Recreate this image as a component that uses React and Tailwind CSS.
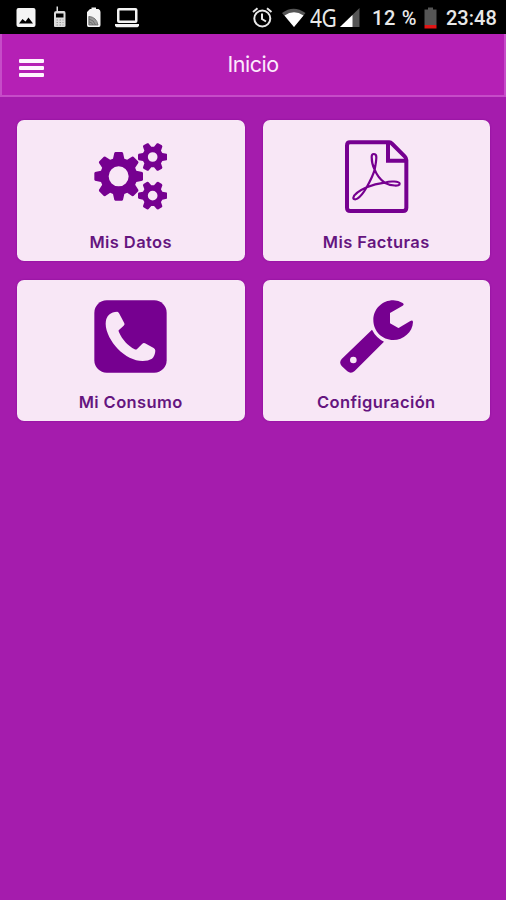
import React from 'react';

// Outline of a gear plus its round hole, teeth start at 3 o'clock
const gearPath = ({ cx, cy, teeth, outer, body, hole, tip, base }) => {
  const points = [];
  for (let i = 0; i < teeth; i++) {
    const a = (i * 2 * Math.PI) / teeth;
    [
      [body, -base],
      [outer - 2, -tip],
      [outer, -tip + 3],
      [outer, tip - 3],
      [outer - 2, tip],
      [body, base],
    ].forEach(([r, t]) => {
      const x = cx + r * Math.cos(a) - t * Math.sin(a);
      const y = cy + r * Math.sin(a) + t * Math.cos(a);
      points.push(`${x.toFixed(1)} ${y.toFixed(1)}`);
    });
  }
  return `M${points.join('L')}ZM${cx - hole} ${cy}a${hole} ${hole} 0 1 0 ${hole * 2} 0a${hole} ${hole} 0 1 0 ${-hole * 2} 0Z`;
};

const gears = [
  { cx: 326, cy: 193, teeth: 8, outer: 73, body: 53, hole: 30, tip: 13, base: 17 },
  { cx: 428, cy: 135, teeth: 6, outer: 44, body: 29, hole: 14.5, tip: 9.5, base: 12 },
  { cx: 428, cy: 251, teeth: 6, outer: 44, body: 29, hole: 14.5, tip: 9.5, base: 12 },
];

const CogsIcon = () => (
  <svg viewBox="252 84 219 219" className="h-[73px] w-[73px]" fill="currentColor">
    {gears.map((gear) => (
      <path key={gear.cy} fillRule="evenodd" d={gearPath(gear)} />
    ))}
  </svg>
);

const PdfIcon = () => (
  <svg viewBox="252 84 219 219" className="h-[73px] w-[73px]" fill="none" stroke="currentColor">
    <path strokeWidth="12" strokeLinejoin="round" d="M282 91H400Q404 91 409 96L446 133Q451 138 451 144V287Q451 297 441 297H283Q273 297 273 287V101Q273 91 282 91Z" />
    <path strokeWidth="12" d="M396 92V146H451" />
    <path
      strokeWidth="6.5"
      strokeLinejoin="round"
      d="M353 126C359 126 361 129 361 135C361 148 358 162 356 173C349 160 347 147 347 135C347 129 348 126 353 126ZM356 173C350 194 341 210 332 226C348 219 368 214 386 212C373 203 363 191 356 173ZM332 226C310 236 294 249 292 257C291 263 299 263 304 260C314 254 323 242 332 226ZM386 212C403 206 430 208 431 215C432 224 405 222 386 212Z"
    />
  </svg>
);

const PhoneIcon = () => (
  <svg viewBox="252 84 219 219" className="h-[73px] w-[73px]">
    <rect x="253" y="85" width="217" height="217" rx="37" fill="currentColor" />
    <path
      fill="#f8e7f6"
      d="M322 119Q326 120 328 125L343 154Q345 158 341 161L326 175Q325 177 327 181C337 204 355 222 374 232Q378 234 382 230L397 215Q401 211 405 214L431 228Q436 231 436 236Q435 252 426 260Q415 267 398 267C372 267 345 252 323 230C304 210 287 180 287 155Q287 138 297 128Q307 119 322 119Z"
    />
  </svg>
);

const WrenchIcon = () => (
  <svg viewBox="252 84 219 219" className="h-[73px] w-[73px]" fill="currentColor">
    <path
      fillRule="evenodd"
      d="M348 173Q360 197 384 209L296 297Q285 307 274 298L257 282Q248 271 257 261ZM292 254A10 10 0 1 0 292 274A10 10 0 1 0 292 254Z"
    />
    <path d="M440 93Q446 97 440 101L402 123V154L427 168Q428 168 434 164L463 147Q470 143 471 150C470 181 442 204 412 204C378 204 352 177 352 144C352 111 379 85 412 85Q428 85 440 93Z" />
  </svg>
);

const items = [
  { label: 'Mis Datos', icon: CogsIcon },
  { label: 'Mis Facturas', icon: PdfIcon },
  { label: 'Mi Consumo', icon: PhoneIcon },
  { label: 'Configuración', icon: WrenchIcon },
];

const StatusBar = () => (
  <div className="flex h-[34px] items-center bg-black pl-4 pr-[9px] font-['Roboto',sans-serif] text-[#e8e8e8]">
    {/* Notification icons */}
    <svg width="124" height="34" viewBox="16 0 124 34" fill="#f4f4f4">
      <path fillRule="evenodd" d="M18.500 8H33.500Q35.500 8 35.500 10V25Q35.500 27 33.500 27H18.500Q16.500 27 16.500 25V10Q16.500 8 18.500 8ZM19 23.500H33L28.500 17.500L25.500 21.500L22.500 19Z" />
      <path fill="#dcdcdc" fillRule="evenodd" d="M56.500 6.500H58V11H64Q65.500 11 65.500 13V26Q65.500 27 64 27H55Q54 27 54 26V13Q54 11 56.500 11ZM56 13.500V17.500H63.500V13.500Z" />
      <path stroke="#999" strokeWidth="1" strokeDasharray="1.500 1.500" d="M56.500 20H63.500M56.500 22.500H63.500M56.500 25H63.500" />
      <path d="M90 9H91.500V7.500H96V9H98.500Q100.500 10 100.500 12V25Q100.500 27 99 27H88.500Q87 27 87 25V12Z" />
      <path fill="#999" d="M88.500 16Q96.500 17 98 25H88.500Z" />
      <path fill="none" stroke="#666" strokeWidth="0.800" d="M89 25V16.500Q96.500 17 98 25ZM89 19Q94 20 95.500 25M89 22Q92 22 93 25" />
      <path fillRule="evenodd" d="M119 8H135.500Q137.500 8 137.500 10V21Q137.500 23 135.500 23H119Q117 23 117 21V10Q117 8 119 8ZM119.500 10.500V20.500H135V10.500Z" />
      <path d="M115 24H139V26L137.500 27.300H116.500L115 26Z" />
    </svg>
    <div className="grow" />
    {/* Alarm, wifi */}
    <svg width="58" height="34" viewBox="250 0 58 34">
      <g fill="none" stroke="#e8e8e8" strokeWidth="2">
        <circle cx="262.300" cy="18.500" r="8" />
        <path d="M262 13.500V19L266 21.500M253 12L257.500 8.300M267 8.300L271.500 12" />
      </g>
      <path fill="#555" d="M282 13Q293.500 4.500 305.500 13L294 27Z" />
      <path fill="#fff" d="M284.500 15.500Q294 9 303.500 15.500L294 27Z" />
    </svg>
    <span className="ml-[2px] w-[29px] origin-left scale-x-[0.84] font-['Noto_Sans',sans-serif] text-[25px] leading-[34px] tracking-[-0.5px]">4G</span>
    <svg width="21" height="34" viewBox="340 0 21 34">
      <path fill="#555" d="M360.500 8V27H341Z" />
      <path fill="#fff" d="M353.500 15V27H341Z" />
    </svg>
    <span className="ml-[12px] w-[46px] whitespace-nowrap pt-[2px] text-[20px] font-medium leading-[34px] tracking-[0.7px]">12 %</span>
    <svg width="14" height="34" viewBox="423 0 14 34" className="ml-[5px]">
      <path fill="#555" d="M424.500 9.500H428V7.500H433V9.500H436.500V25H424.500Z" />
      <path fill="#e01515" d="M424.500 25H436.500V28.500H424.500Z" />
    </svg>
    <span className="ml-[9px] w-[51px] whitespace-nowrap pt-[2px] text-[20px] font-medium leading-[34px]">23:48</span>
  </div>
);

const Header = () => (
  <header className="grid h-[63px] grid-cols-3 items-center border-x-2 border-b-2 border-[#c64cc8] bg-[#b520b5] pl-[17px] pr-[17px]">
    <button aria-label="Menu" className="mt-[6px] flex w-[25px] flex-col gap-[3px]">
      <span className="h-[4px] rounded-[1px] bg-[#fff5ff]" />
      <span className="h-[4px] rounded-[1px] bg-[#fff5ff]" />
      <span className="h-[4px] rounded-[1px] bg-[#fff5ff]" />
    </button>
    <h1 className="pb-[2px] text-center font-['Inter',sans-serif] text-[21.5px] leading-7 tracking-[-0.5px] text-[#fdeafd]">Inicio</h1>
  </header>
);

const MenuCard = ({ label, icon: Icon }) => (
  <button className="flex h-[141px] flex-col items-center rounded-[7px] bg-[#f8e7f6] pt-5 text-[#760090] shadow-[0_0_2px_#850b96]">
    <Icon />
    <span className="mt-[17px] font-['Inter',sans-serif] text-[16.5px] font-semibold leading-6 tracking-[0.4px] text-[#65157f]">
      {label}
    </span>
  </button>
);

export default function App() {
  return (
    <div className="flex h-screen w-full flex-col overflow-hidden bg-[#a51cad]">
      <StatusBar />
      <Header />
      <main className="grid grid-cols-2 gap-x-[18px] gap-y-[19px] pl-[17px] pr-4 pt-[23px]">
        {items.map((item) => (
          <MenuCard key={item.label} {...item} />
        ))}
      </main>
    </div>
  );
}
